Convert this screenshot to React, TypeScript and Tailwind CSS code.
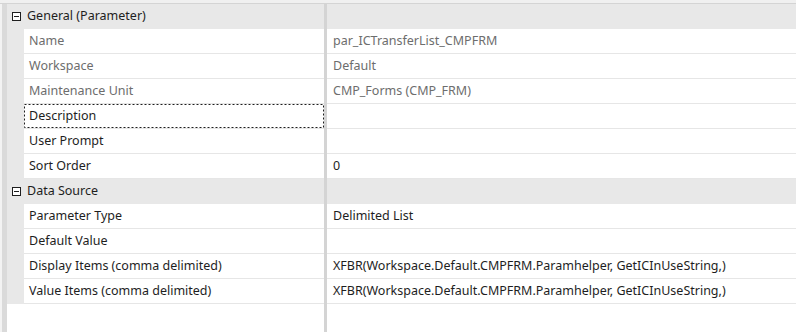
import React from "react";

type Row = { label: string; value?: string; disabled?: boolean; focus?: boolean };
type Group = { title: string; rows: Row[] };

const groups: Group[] = [
  {
    title: "General (Parameter)",
    rows: [
      { label: "Name", value: "par_ICTransferList_CMPFRM", disabled: true },
      { label: "Workspace", value: "Default", disabled: true },
      { label: "Maintenance Unit", value: "CMP_Forms (CMP_FRM)", disabled: true },
      { label: "Description", value: "", focus: true },
      { label: "User Prompt", value: "" },
      { label: "Sort Order", value: "0" },
    ],
  },
  {
    title: "Data Source",
    rows: [
      { label: "Parameter Type", value: "Delimited List" },
      { label: "Default Value", value: "" },
      { label: "Display Items (comma delimited)", value: "XFBR(Workspace.Default.CMPFRM.Paramhelper, GetICInUseString,)" },
      { label: "Value Items (comma delimited)", value: "XFBR(Workspace.Default.CMPFRM.Paramhelper, GetICInUseString,)" },
    ],
  },
];

function Minus() {
  return (
    <svg width="9" height="9" viewBox="0 0 9 9" className="block">
      <rect x="0.5" y="0.5" width="8" height="8" fill="white" stroke="#1e1e1e" strokeWidth="1" />
      <line x1="2" y1="4.5" x2="7" y2="4.5" stroke="#1e1e1e" strokeWidth="1" />
    </svg>
  );
}

export default function App() {
  return (
    <div
      className="w-[796px] h-[332px] bg-white flex flex-col overflow-hidden text-[12.5px]"
      style={{ fontFamily: '"Segoe UI", "Noto Sans", "Open Sans", sans-serif' }}
    >
      <div className="h-[3px] bg-[#f0f0f0] shrink-0" />
      <div className="h-[1px] bg-[#d4d4d4] shrink-0" />
      <div className="flex flex-1 min-h-0">
        <div className="w-[2px] bg-[#f3f3f3] shrink-0" />
        <div className="w-[5px] bg-[#dadada] shrink-0" />
        <div className="flex-1 relative">
          <div className="absolute top-0 bottom-0 left-[317px] w-[3px] bg-[#d4d4d4]" />
          {groups.map((g) => (
            <div key={g.title}>
              <div className="h-[25px] bg-[#e8e8e8] flex items-center">
                <div className="w-[5px]" />
                <Minus />
                <span className="ml-[6px] text-[#1e1e1e]">{g.title}</span>
              </div>
              {g.rows.map((r) => (
                <div key={r.label} className="h-[25px] flex bg-[#e8e8e8]">
                  <div className="w-[17px] shrink-0" />
                  <div className="flex-1 flex bg-white border-b border-[#e6e6e6]">
                    <div
                      className={
                        "relative w-[300px] shrink-0 flex items-center pl-[5px] " +
                        (r.disabled ? "text-[#6d6d6d]" : "text-[#1e1e1e]")
                      }
                    >
                      {r.focus && (
                        <svg className="absolute left-0 top-0" width="300" height="24">
                          <rect
                            x="0.5"
                            y="0.5"
                            width="299"
                            height="23"
                            fill="none"
                            stroke="#1e1e1e"
                            strokeWidth="1"
                            strokeDasharray="2 2"
                          />
                        </svg>
                      )}
                      {r.label}
                    </div>
                    <div className="w-[3px] shrink-0" />
                    <div
                      className={
                        "flex-1 flex items-center pl-[6px] " +
                        (r.disabled ? "text-[#6d6d6d]" : "text-[#1e1e1e]")
                      }
                    >
                      {r.value}
                    </div>
                  </div>
                </div>
              ))}
            </div>
          ))}
        </div>
      </div>
    </div>
  );
}
